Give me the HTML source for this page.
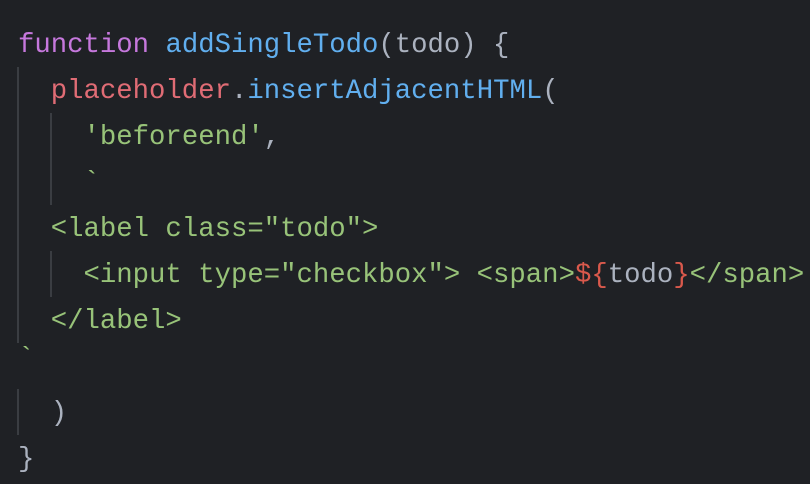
<!DOCTYPE html>
<html><head><style>
html,body{margin:0;padding:0;background:#1f2125;width:810px;height:484px;overflow:hidden}
.l{position:absolute;left:18px;font-family:"Liberation Mono",monospace;font-size:27.3px;line-height:46px;height:46px;white-space:pre;color:#abb2bf}
.g{position:absolute;width:2px;background:#3a3d42}
.k{color:#c678dd}.f{color:#61afef}.v{color:#e06c75}.s{color:#98c379}.t{color:#d9594c}
</style></head><body>
<div class="g" style="left:17px;top:67px;height:276px"></div>
<div class="g" style="left:17px;top:389px;height:46px"></div>
<div class="g" style="left:50px;top:113px;height:92px"></div>
<div class="g" style="left:50px;top:251px;height:46px"></div>
<div class="l" style="top:23px"><span class="k">function</span> <span class="f">addSingleTodo</span>(todo) {</div>
<div class="l" style="top:69px">  <span class="v">placeholder</span>.<span class="f">insertAdjacentHTML</span>(</div>
<div class="l" style="top:115px">    <span class="s">'beforeend'</span>,</div>
<div class="l" style="top:161px">    <span class="s">`</span></div>
<div class="l s" style="top:207px">  &lt;label class="todo"&gt;</div>
<div class="l s" style="top:253px">    &lt;input type="checkbox"&gt; &lt;span&gt;<span class="t">${</span><span style="color:#abb2bf">todo</span><span class="t">}</span>&lt;/span&gt;</div>
<div class="l s" style="top:299px">  &lt;/label&gt;</div>
<div class="l s" style="top:337px">`</div>
<div class="l" style="top:391px">  )</div>
<div class="l" style="top:437px">}</div>
</body></html>
